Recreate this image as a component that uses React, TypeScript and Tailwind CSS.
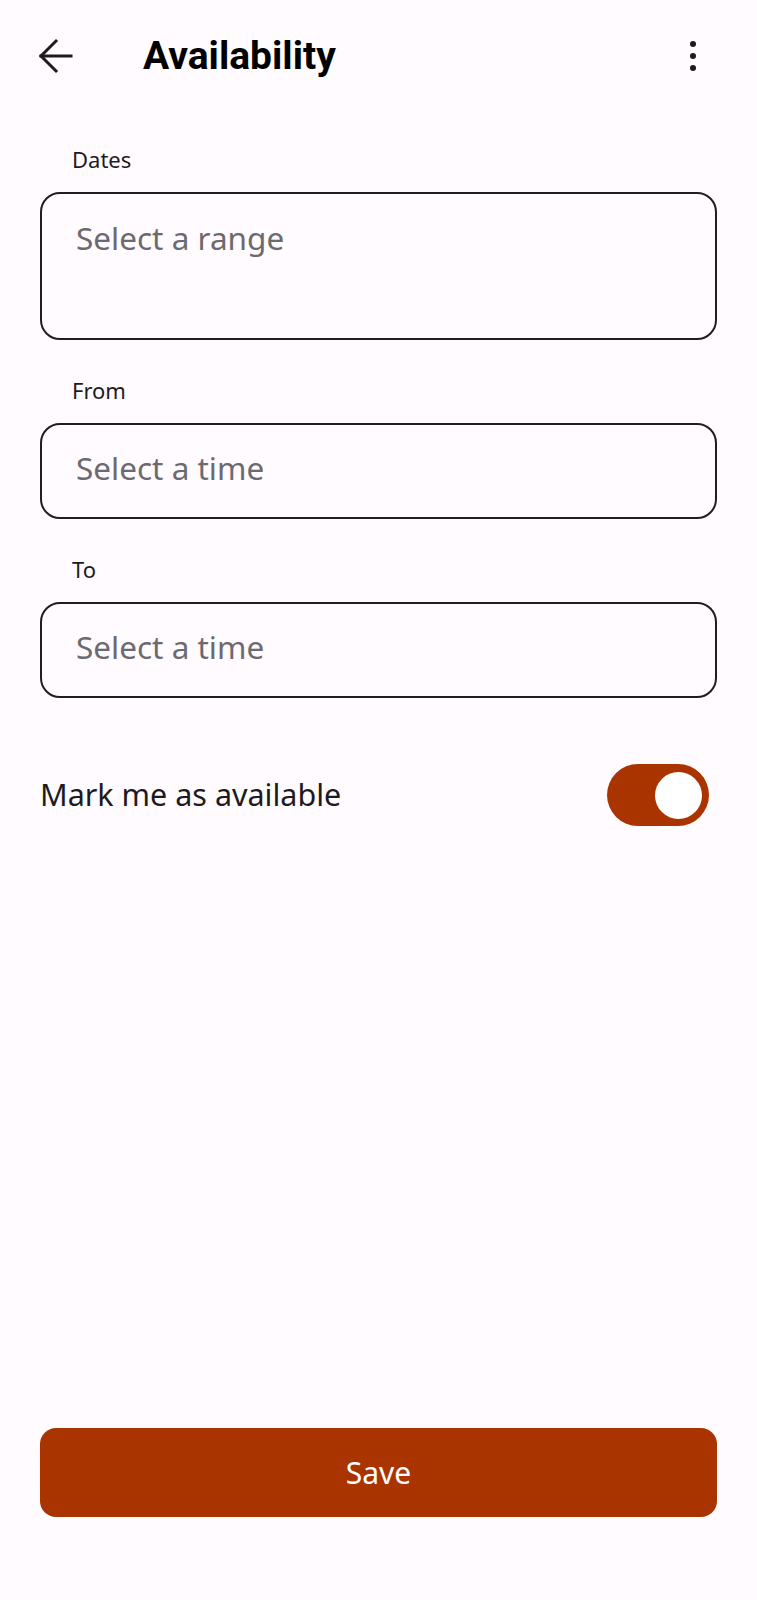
import { useState } from 'react'

const body = { fontFamily: '"Noto Sans", "Open Sans", sans-serif' }

function Field({ label, placeholder, tall }: { label: string; placeholder: string; tall?: boolean }) {
  return (
    <div className="flex flex-col">
      <span className="ml-[32px] text-[22px] leading-[30px] text-[#1d1b1e]" style={body}>
        {label}
      </span>
      <div
        className={`mt-[18px] rounded-[20px] border-2 border-[#1f1f1f] pl-[34px] ${tall ? 'h-[148px] pt-[23px]' : 'h-[96px] pt-[22px]'}`}
      >
        <span className="block text-[31.5px] leading-[42px] text-[#6c6a6e]" style={body}>
          {placeholder}
        </span>
      </div>
    </div>
  )
}

export default function App() {
  const [available, setAvailable] = useState(true)

  return (
    <div className="flex min-h-[1600px] w-full flex-col bg-[#fffbff]">
      <header className="flex h-[112px] items-center">
        <button className="ml-[37px] flex h-[36px] w-[36px] items-center justify-center">
          <svg width="36" height="36" viewBox="0 0 36 36" fill="none" stroke="#1d1b1e" strokeWidth="3" strokeLinecap="square">
            <path d="M4 18H34" />
            <path d="M19 3L4 18l15 15" />
          </svg>
        </button>
        <h1
          className="ml-[70px] text-[39px] font-bold leading-none text-black"
          style={{ fontFamily: 'Roboto, "Liberation Sans", sans-serif' }}
        >
          Availability
        </h1>
        <div className="ml-auto mr-[61px] flex flex-col items-center gap-[6px]">
          <span className="h-[6px] w-[6px] rounded-full bg-[#1d1b1e]" />
          <span className="h-[6px] w-[6px] rounded-full bg-[#1d1b1e]" />
          <span className="h-[6px] w-[6px] rounded-full bg-[#1d1b1e]" />
        </div>
      </header>

      <main className="flex flex-1 flex-col px-[40px]">
        <div className="mt-[32px] flex flex-col gap-[35px]">
          <Field label="Dates" placeholder="Select a range" tall />
          <Field label="From" placeholder="Select a time" />
          <Field label="To" placeholder="Select a time" />
        </div>

        <div className="mt-[64px] flex items-center justify-between">
          <span className="text-[30.5px] leading-[41px] text-[#1d1b1e]" style={body}>
            Mark me as available
          </span>
          <button
            onClick={() => setAvailable(!available)}
            className={`mr-[8px] mt-[2px] flex h-[62px] w-[102px] items-center rounded-full px-[7px] ${available ? 'justify-end bg-[#aa3400]' : 'justify-start bg-[#e7e0e6]'}`}
          >
            <span className="h-[47px] w-[47px] rounded-full bg-white" />
          </button>
        </div>

        <div className="flex-1" />

        <button
          className="mb-[83px] flex h-[89px] w-full items-center justify-center rounded-[16px] bg-[#aa3400] text-[30px] text-white"
          style={body}
        >
          Save
        </button>
      </main>
    </div>
  )
}
